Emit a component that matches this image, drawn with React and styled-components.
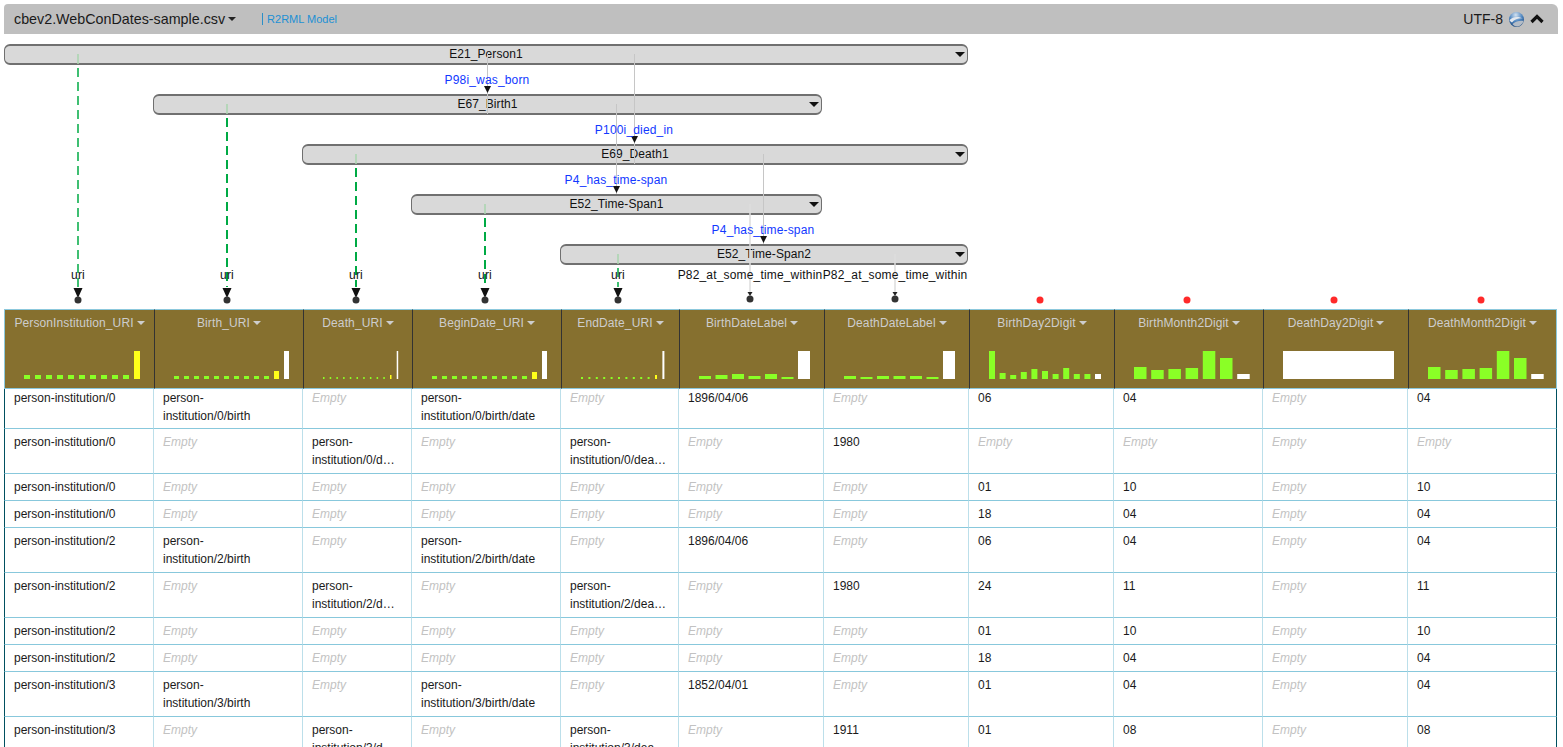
import React from 'react';
import styled, {createGlobalStyle} from 'styled-components';

const GlobalStyle = createGlobalStyle`
html, body {
  margin: 0;
  padding: 0;
  height: 100%;
  overflow: hidden;
  background: #fff;
  font-family: "Liberation Sans", Arial, sans-serif;
}
`

const Page = styled.div`
height: 747px;
overflow: hidden;
padding: 4px 5px 0 4px;
box-sizing: border-box;
`

const TopBar = styled.div`
height: 30px;
background: #bfbfbf;
border-radius: 4px 6px 0 0;
display: flex;
align-items: center;
padding: 0 14px 0 10px;
`

const Title = styled.span`
font-size: 14.3px;
color: #1a1a1a;
`

const Caret = styled.i`
display: inline-block;
width: 0;
height: 0;
margin-left: ${p => p.$gap || 3}px;
border-top: 4px solid ${p => p.$color || '#222'};
border-left: 4px solid transparent;
border-right: 4px solid transparent;
`

const ModelLink = styled.span`
margin-left: 26px;
padding-left: 4px;
border-left: 1px solid #2a8fc8;
font-size: 11px;
line-height: 12px;
color: #1c90d4;
`

const Encoding = styled.span`
margin-left: auto;
font-size: 14px;
color: #1a1a1a;
`

const IconSlot = styled.span`
display: flex;
margin-left: ${p => p.$gap}px;
`

const Canvas = styled.div`
position: relative;
height: 275px;
`

const Node = styled.div`
position: absolute;
left: ${p => p.$left}px;
top: ${p => p.$top}px;
width: ${p => p.$width}px;
height: 21px;
box-sizing: border-box;
background: #d9d9d9;
border: 1px solid #707070;
border-top-width: 2px;
border-bottom-width: 2px;
border-radius: 6px;
font-size: 12px;
letter-spacing: 0.08px;
line-height: 17px;
text-align: center;
color: #111;
&::after {
  content: '';
  position: absolute;
  right: 2px;
  top: 6px;
  border-top: 5px solid #111;
  border-left: 5px solid transparent;
  border-right: 5px solid transparent;
}
`

const Links = styled.svg`
position: absolute;
left: 0;
top: 0;
pointer-events: none;
`

const LinkLabel = styled.span`
position: absolute;
left: ${p => p.$x}px;
top: ${p => p.$top}px;
transform: translateX(-50%);
font-size: 12px;
letter-spacing: 0.17px;
line-height: 14px;
white-space: nowrap;
color: ${p => p.$blue ? '#1238ff' : '#111'};
`

const Table = styled.div`
display: grid;
grid-template-columns: 150px 149px 109px 149px 118px 145px 145px 145px 149px 145px 149px;
`

const HeadCell = styled.div`
height: 80px;
box-sizing: border-box;
background: #86702f;
border-top: 1px solid #8cc8dc;
border-bottom: 1px solid #8cc8dc;
border-left: 1px solid #333;
display: flex;
flex-direction: column;
padding: 5px 0 9px;
&:first-child {
  border-left-color: #8cc8dc;
}
&:nth-child(11) {
  border-right: 1px solid #8cc8dc;
}
`

const HeadLabel = styled.div`
height: 16px;
display: flex;
align-items: center;
justify-content: center;
font-size: 12px;
letter-spacing: 0.12px;
color: #cdcdcd;
white-space: nowrap;
`

const Histogram = styled.svg`
display: block;
margin-top: auto;
`

const Cell = styled.div`
box-sizing: border-box;
padding: ${p => p.$firstRow ? 0 : 4}px 4px ${p => p.$firstRow ? 3 : 4}px 9px;
border-bottom: 1px solid #88c8dc;
border-right: 1px solid ${p => p.$lastCol ? '#005060' : '#bcdfea'};
border-left: ${p => p.$firstCol ? '1px solid #005060' : 'none'};
font-size: 12px;
line-height: 18px;
white-space: pre-line;
color: ${p => p.$empty ? '#c2c2c2' : '#1a1a1a'};
font-style: ${p => p.$empty ? 'italic' : 'normal'};
`

const GREEN = '#8aff26';
const YELLOW = '#ffff1a';
const WHITE = '#ffffff';

const inst = (n, tail) => tail ? `person-\ninstitution/${n}${tail}` : `person-institution/${n}`;

const columns = [
    {name: 'PersonInstitution_URI', left: 4, width: 150, start: 24, step: 11, w: 6, heights: [4,4,4,4,4,4,4,4,4,4,28], colors: {10: YELLOW}},
    {name: 'Birth_URI', left: 154, width: 149, start: 174, step: 10, w: 5, heights: [3,3,3,3,3,3,3,3,3,3,8,28], colors: {10: YELLOW, 11: WHITE}},
    {name: 'Death_URI', left: 303, width: 109, start: 323, step: 6.7, w: 1.5, heights: [2,2,2,2,2,2,2,2,2,2,4,28], colors: {10: YELLOW, 11: WHITE}},
    {name: 'BeginDate_URI', left: 412, width: 149, start: 432, step: 10, w: 5, heights: [3,3,3,3,3,3,3,3,3,3,7,28], colors: {10: YELLOW, 11: WHITE}},
    {name: 'EndDate_URI', left: 561, width: 118, start: 581, step: 7.4, w: 2, heights: [2,2,2,2,2,2,2,2,2,2,4,28], colors: {10: YELLOW, 11: WHITE}},
    {name: 'BirthDateLabel', left: 679, width: 145, start: 699, step: 16.5, w: 12, heights: [3,4,5,3,5,2,28], colors: {6: WHITE}},
    {name: 'DeathDateLabel', left: 824, width: 145, start: 844, step: 16.5, w: 12, heights: [3,2,3,3,3,2,28], colors: {6: WHITE}},
    {name: 'BirthDay2Digit', left: 969, width: 145, start: 989, step: 10.6, w: 6, heights: [28,6,4,7,10,8,5,11,5,5,5], colors: {10: WHITE}},
    {name: 'BirthMonth2Digit', left: 1114, width: 149, start: 1134, step: 17.2, w: 12.5, heights: [12,9,10,11,28,21,5], colors: {6: WHITE}},
    {name: 'DeathDay2Digit', left: 1263, width: 145, start: 1283, step: 0, w: 111, heights: [28], colors: {0: WHITE}},
    {name: 'DeathMonth2Digit', left: 1408, width: 149, start: 1428, step: 17.2, w: 12.5, heights: [12,9,10,11,28,21,5], colors: {6: WHITE}},
];

const E = null;

const rows = [
    [inst(0), inst(0,'/birth'), E, inst(0,'/birth/date'), E, '1896/04/06', E, '06', '04', E, '04'],
    [inst(0), E, inst(0,'/d…'), E, inst(0,'/dea…'), E, '1980', E, E, E, E],
    [inst(0), E, E, E, E, E, E, '01', '10', E, '10'],
    [inst(0), E, E, E, E, E, E, '18', '04', E, '04'],
    [inst(2), inst(2,'/birth'), E, inst(2,'/birth/date'), E, '1896/04/06', E, '06', '04', E, '04'],
    [inst(2), E, inst(2,'/d…'), E, inst(2,'/dea…'), E, '1980', '24', '11', E, '11'],
    [inst(2), E, E, E, E, E, E, '01', '10', E, '10'],
    [inst(2), E, E, E, E, E, E, '18', '04', E, '04'],
    [inst(3), inst(3,'/birth'), E, inst(3,'/birth/date'), E, '1852/04/01', E, '01', '04', E, '04'],
    [inst(3), E, inst(3,'/d…'), E, inst(3,'/dea…'), E, '1911', '01', '08', E, '08'],
];

// canvas coordinates are the page ones minus the 4px page inset and the 34px of the bar
const cx = x => x - 4;
const cy = y => y - 34;

const nodes = [
    {name: 'E21_Person1', left: 4, top: 44, width: 964},
    {name: 'E67_Birth1', left: 153, top: 94, width: 669},
    {name: 'E69_Death1', left: 302, top: 144, width: 666},
    {name: 'E52_Time-Span1', left: 411, top: 194, width: 411},
    {name: 'E52_Time-Span2', left: 560, top: 244, width: 408},
];

const links = [
    {x: 487, from: 54, to: 94, end: 114, label: 'P98i_was_born'},
    {x: 634, from: 54, to: 144, end: 164, label: 'P100i_died_in'},
    {x: 616, from: 104, to: 194, end: 194, label: 'P4_has_time-span'},
    {x: 763, from: 154, to: 244, end: 244, label: 'P4_has_time-span'},
];

const uriLinks = [
    {x: 78, from: 54, strokeWidth: 1.5},
    {x: 227, from: 104, strokeWidth: 2},
    {x: 356, from: 154, strokeWidth: 2},
    {x: 485, from: 204, strokeWidth: 2},
    {x: 618, from: 254, strokeWidth: 1.5},
];

const valueLinks = [
    {x: 750, from: 204},
    {x: 895, from: 254},
];

const redDots = [1040, 1187, 1334, 1481];

const GlobeIcon = () => (
    <svg width="17" height="17" viewBox="0 0 17 17">
        <defs>
            <radialGradient id="globeFill" cx="45%" cy="20%" r="85%">
                <stop offset="0%" stopColor="#d4e2f0"/>
                <stop offset="50%" stopColor="#4f86c0"/>
                <stop offset="100%" stopColor="#143f74"/>
            </radialGradient>
        </defs>
        <circle cx="8.5" cy="8.5" r="7.5" fill="url(#globeFill)"/>
        <path d="M1.5 9C5 5.5 10 5 15.5 7.5C11 6.8 7 8 4 11.5C3 11 2 10 1.5 9Z" fill="#e4e8ee"/>
        <path d="M4.5 13C8 10 12 9.5 15.5 10C14.5 13.5 11.5 15.5 8.5 15.5C7 15.5 5.5 14.5 4.5 13Z" fill="#b4bcc6"/>
    </svg>
);

const ChevronIcon = () => (
    <svg width="14" height="10" viewBox="0 0 14 10">
        <path d="M1.5 8L7 2.6L12.5 8" fill="none" stroke="#111" strokeWidth="3.2"/>
    </svg>
);

const ColumnChart = ({column}) => {
    const width = column.width - 1;
    return (
        <Histogram width={width} height={28} viewBox={`0 0 ${width} 28`}>
            {column.heights.map((h, i) => (
                <rect
                    key={i}
                    x={column.start - column.left - 1 + i * column.step}
                    y={28 - h}
                    width={column.w}
                    height={h}
                    fill={column.colors[i] || GREEN}
                />
            ))}
        </Histogram>
    );
};

const ModelCanvas = () => (
    <Canvas>
        {nodes.map(n => (
            <Node key={n.name} $left={cx(n.left)} $top={cy(n.top)} $width={n.width}>{n.name}</Node>
        ))}
        <Links width="1554" height="275" viewBox="0 0 1554 275">
            {links.map(l => (
                <g key={l.x}>
                    <line x1={cx(l.x) + .5} x2={cx(l.x) + .5} y1={cy(l.from)} y2={cy(l.end)} stroke="#c6c6c6"/>
                    <path d={`M${cx(l.x) - 3} ${cy(l.to) - 8}h7l-3.5 7z`} fill="#111"/>
                </g>
            ))}
            {uriLinks.map(l => (
                <g key={l.x}>
                    <line x1={cx(l.x)} x2={cx(l.x)} y1={cy(l.from)} y2={cy(l.from + 10)} stroke="#a9d4ae" strokeWidth="1.5"/>
                    <line x1={cx(l.x)} x2={cx(l.x)} y1={cy(l.from + 14)} y2={cy(287)} stroke="#00aa44" strokeWidth={l.strokeWidth} strokeDasharray="9 5"/>
                    <path d={`M${cx(l.x) - 4.5} ${cy(288)}h9l-4.5 10z`} fill="#111"/>
                    <circle cx={cx(l.x)} cy={cy(300)} r="3.5" fill="#333"/>
                </g>
            ))}
            {valueLinks.map(l => (
                <g key={l.x}>
                    <line x1={cx(l.x)} x2={cx(l.x)} y1={cy(l.from)} y2={cy(294)} stroke="#dcdcdc" strokeWidth="1.5"/>
                    <path d={`M${cx(l.x) - 2.5} ${cy(292)}h5l-2.5 4z`} fill="#222"/>
                    <circle cx={cx(l.x)} cy={cy(299)} r="3.5" fill="#333"/>
                </g>
            ))}
            {redDots.map(x => (
                <circle key={x} cx={cx(x)} cy={cy(300)} r="3.5" fill="#ff2a2a"/>
            ))}
        </Links>
        {links.map(l => (
            <LinkLabel key={l.x} $blue $x={cx(l.x)} $top={cy(l.to - 21)}>{l.label}</LinkLabel>
        ))}
        {uriLinks.map(l => (
            <LinkLabel key={l.x} $x={cx(l.x)} $top={cy(268)}>uri</LinkLabel>
        ))}
        {valueLinks.map(l => (
            <LinkLabel key={l.x} $x={cx(l.x)} $top={cy(268)}>P82_at_some_time_within</LinkLabel>
        ))}
    </Canvas>
);

const App = () => (
    <Page>
        <GlobalStyle/>
        <TopBar>
            <Title>cbev2.WebConDates-sample.csv</Title>
            <Caret/>
            <ModelLink>R2RML Model</ModelLink>
            <Encoding>UTF-8</Encoding>
            <IconSlot $gap={5}><GlobeIcon/></IconSlot>
            <IconSlot $gap={5}><ChevronIcon/></IconSlot>
        </TopBar>
        <ModelCanvas/>
        <Table>
            {columns.map(c => (
                <HeadCell key={c.name}>
                    <HeadLabel>{c.name}<Caret $color="#cdcdcd" $gap={3}/></HeadLabel>
                    <ColumnChart column={c}/>
                </HeadCell>
            ))}
            {rows.map((row, r) => row.map((value, c) => (
                <Cell key={`${r}-${c}`} $firstRow={r === 0} $firstCol={c === 0} $lastCol={c === 10} $empty={value === E}>
                    {value === E ? 'Empty' : value}
                </Cell>
            )))}
        </Table>
    </Page>
);

export default App;
